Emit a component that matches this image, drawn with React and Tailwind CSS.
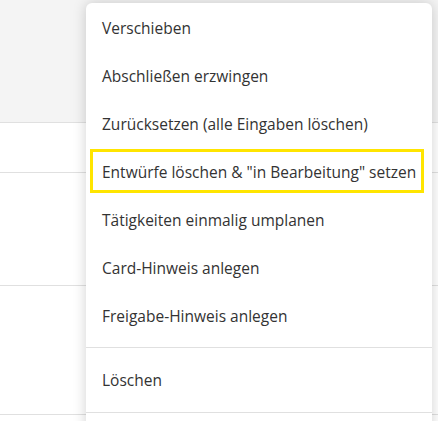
export default function App() {
  const items = [
    "Verschieben",
    "Abschließen erzwingen",
    "Zurücksetzen (alle Eingaben löschen)",
    'Entwürfe löschen & "in Bearbeitung" setzen',
    "Tätigkeiten einmalig umplanen",
    "Card-Hinweis anlegen",
    "Freigabe-Hinweis anlegen",
  ];

  return (
    <div className="relative w-[438px] h-[421px] overflow-hidden bg-white" style={{ fontFamily: '"Open Sans", "Noto Sans", sans-serif' }}>
      {/* table rows behind the menu */}
      <div className="h-[123px] bg-[#f4f4f4] border-b border-[#e0e0e0]"></div>
      <div className="h-[50px] border-b border-[#e0e0e0]"></div>
      <div className="h-[113px] border-b border-[#e0e0e0]"></div>
      <div className="h-[129px] border-b border-[#e0e0e0]"></div>

      {/* context menu */}
      <div className="absolute left-[86px] top-[3px] w-[346px] bg-white rounded-t-md shadow-[0_0_14px_rgba(0,0,0,0.18)]">
        {items.map((label, i) => (
          <div key={label} className="h-12 flex items-center">
            {i === 3 ? (
              <div className="ml-1 mr-2 flex-1 h-11 flex items-center border-[3px] border-[#ffe500] pl-[9px] pt-1 text-[15.5px] text-[#333]">
                {label}
              </div>
            ) : (
              <div className="pl-4 pt-1 text-[15.5px] text-[#333]">{label}</div>
            )}
          </div>
        ))}
        <div className="h-2"></div>
        <div className="border-t border-[#e0e0e0] py-2">
          <div className="h-12 flex items-center pl-4 pt-0.5 text-[15.5px] text-[#333]">Löschen</div>
        </div>
        <div className="border-t border-[#e0e0e0] h-6"></div>
      </div>
    </div>
  );
}
